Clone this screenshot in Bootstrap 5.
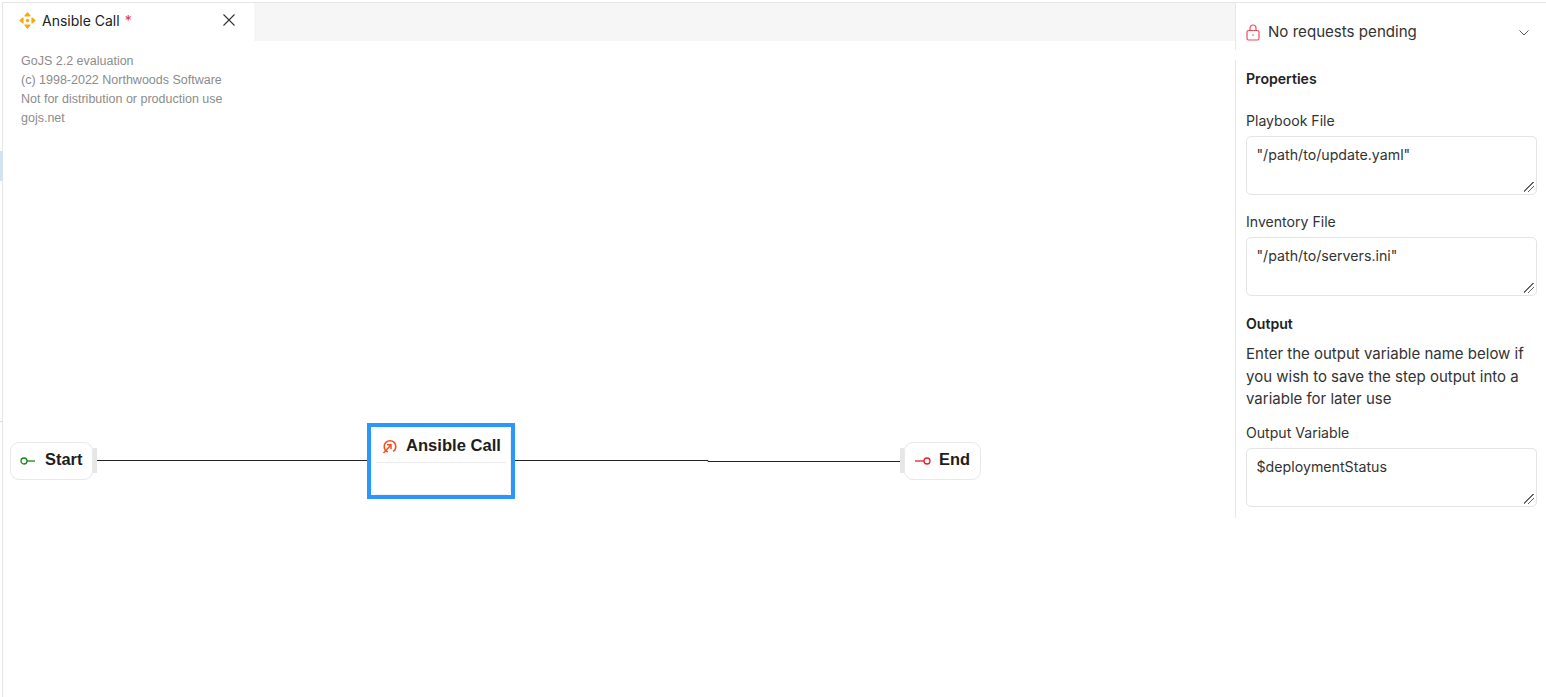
<!DOCTYPE html>
<html lang="en">
<head>
    <meta charset="UTF-8">
    <title>Ansible Call</title>
    <link href="https://cdn.jsdelivr.net/npm/bootstrap@5.3.3/dist/css/bootstrap.min.css" rel="stylesheet">
    <script src="https://cdn.jsdelivr.net/npm/bootstrap@5.3.3/dist/js/bootstrap.bundle.min.js"></script>
    <style>
        html, body { height: 100%; overflow: hidden; }
        body { font-family: Inter, "Liberation Sans", sans-serif; color: #222; background: #fff; }
        .app-frame { height: 697px; margin: 2px 0 0 2px; border-top: 1px solid #e6e6e6; border-left: 1px solid #e6e6e6; position: relative; }
        .nav-marker { position: absolute; left: -3px; top: 148px; width: 3px; height: 30px; background: #d3e3f2; }
        .nav-tick { position: absolute; left: -3px; top: 418px; width: 3px; height: 1px; background: #ddd; }
        .work-area { width: 1232px; }
        .tab-strip { height: 38px; background: #f6f6f6; }
        .doc-tab { width: 251px; background: #fff; padding: 0 19px 4px 16px; font-size: 14px; }
        .tab-glyph { margin-right: 6px; }
        .dirty-mark { color: #e8343f; margin-left: 5px; }
        .diagram { height: 656px; }
        .watermark { position: absolute; left: 18px; top: 11px; font: 12.5px/19px "Liberation Sans", sans-serif; color: #8c8c8c; }
        .flow-lines { position: absolute; left: 0; top: -41px; }
        .flow-node { position: absolute; background: #fff; border: 1px solid #e8e8e8; border-radius: 9px; font: bold 16.4px "Liberation Sans", sans-serif; color: #1d1d1d; }
        .start-node { left: 7px; top: 401px; width: 83px; height: 38px; padding-left: 34px; line-height: 32px; }
        .end-node { left: 901px; top: 401px; width: 77px; height: 38px; padding-left: 34px; line-height: 32px; }
        .node-icon { position: absolute; left: 9px; top: 12px; }
        .end-node .node-icon { left: 10px; }
        .port-tab { position: absolute; top: 5px; width: 4px; height: 25px; background: #e6e6e6; }
        .start-node .port-tab { right: -5px; }
        .end-node .port-tab { left: -5px; }
        .call-node { left: 364px; top: 382px; width: 148px; height: 76px; border: 4px solid #2b96fb; border-radius: 0; }
        .call-inner { height: 100%; border: 1px solid #efefef; border-radius: 6px; }
        .call-title { height: 35px; margin: 0 4px; padding-left: 30px; line-height: 35px; border-bottom: 1px solid #ececec; position: relative; font-size: 16.6px; white-space: nowrap; }
        .call-title svg { position: absolute; left: 6px; top: 11px; }
        .side-panel { width: 311px; }
        .request-bar { height: 47px; padding: 12px 17px 0 10px; border-left: 1px solid #e8e8e8; font-size: 15.1px; color: #333; }
        .prop-panel { margin-top: 10px; height: 458px; border-left: 1px solid #e8e8e8; padding: 9px 9px 0 10px; font-size: 14.1px; color: #333; }
        .prop-title { font-size: 14.1px; font-weight: 600; color: #222; line-height: 20px; }
        .prop-label { font-size: 14.1px; line-height: 20px; margin: 0 0 5px; }
        .prop-input.form-control { height: 59px; min-height: 59px; font-size: 14.2px; line-height: 20px; padding: 8px 10px 8px 9.500px; border: 1px solid #e4e4e4; border-radius: 5px; color: #333; }
        .prop-input::-webkit-resizer { background: linear-gradient(135deg, transparent 43%, #666 43%, #666 51%, transparent 51%, transparent 66%, #666 66%, #666 73%, transparent 73%) no-repeat 3px 3px / 10px 10px; }
        .prop-gap { margin-bottom: 17px; }
        .prop-head-gap { margin-bottom: 22px; }
        .output-title { margin-top: 18px; margin-bottom: 9px; }
        .prop-help { font-size: 15px; line-height: 22.5px; margin: 0 0 12.5px; }
    </style>
</head>
<body>

<div class="app-frame d-flex">
    <div class="nav-marker"></div>
    <div class="nav-tick"></div>

    <div class="work-area">
        <div class="tab-strip d-flex">
            <div class="doc-tab d-flex align-items-center">
                <svg width="17" height="17" viewBox="0 0 17 17" class="tab-glyph flex-shrink-0" fill="#f7a90d" stroke="#f7a90d" stroke-width="1.200" stroke-linejoin="round">
                    <path d="M8.500 1 11 4H6z"/><path d="M8.500 16 6 13h5z"/>
                    <path d="M1 8.500 4 6v5z"/><path d="M16 8.500 13 11V6z"/>
                    <circle cx="8.500" cy="8.500" r="1.700" stroke="none"/>
                </svg>
                <span>Ansible Call</span><span class="dirty-mark">*</span>
                <svg width="12" height="12" viewBox="0 0 12 12" class="ms-auto" stroke="#333" stroke-width="1.100" fill="none"><path d="M0.500 0.500l11 11M11.500 0.500l-11 11"/></svg>
            </div>
        </div>

        <div class="diagram position-relative">
            <div class="watermark">GoJS 2.2 evaluation<br>(c) 1998-2022 Northwoods Software<br>Not for distribution or production use<br>gojs.net</div>

            <svg class="flow-lines" width="1232" height="600" fill="none" stroke="#222" stroke-width="1">
                <path d="M92 460.500H365"/>
                <path d="M511 460.500H705V461.500H899"/>
            </svg>

            <div class="flow-node start-node">
                <svg class="node-icon" width="16" height="12" viewBox="0 0 16 12" fill="none" stroke="#138a13" stroke-width="1.300"><circle cx="4" cy="6" r="3"/><path d="M7 6h8"/></svg>
                Start
                <span class="port-tab"></span>
            </div>

            <div class="flow-node call-node">
                <div class="call-inner">
                    <div class="call-title">
                        <svg width="15" height="15" viewBox="0 0 15 15" fill="none" stroke="#f4511e" stroke-width="1.500"><circle cx="8" cy="7.500" r="5.800" stroke-dasharray="31 5.400" stroke-dashoffset="-11"/><path d="M1.500 14 8.500 6.500M5 5.800h4v4.200"/></svg>
                        Ansible Call
                    </div>
                </div>
            </div>

            <div class="flow-node end-node">
                <svg class="node-icon" width="16" height="12" viewBox="0 0 16 12" fill="none" stroke="#ee1c25" stroke-width="1.300"><path d="M0 6h9"/><circle cx="12" cy="6" r="3"/></svg>
                End
                <span class="port-tab"></span>
            </div>
        </div>
    </div>

    <div class="side-panel">
        <div class="request-bar d-flex align-items-center">
            <svg width="14" height="17" viewBox="0 0 14 17" class="me-2" fill="none" stroke="#ee4b5a" stroke-width="1.200">
                <rect x="1" y="6.500" width="12" height="9.500" rx="1.500"/>
                <path d="M4 6.500V4a3 3 0 0 1 6 0v2.500"/>
                <circle cx="7" cy="11" r="0.800" fill="#ee4b5a" stroke="none"/>
            </svg>
            <span>No requests pending</span>
            <svg width="10" height="6" viewBox="0 0 10 6" class="ms-auto" fill="none" stroke="#555" stroke-width="1"><path d="M0.500 0.500 5 5l4.500-4.500"/></svg>
        </div>

        <div class="prop-panel">
            <div class="prop-title prop-head-gap">Properties</div>

            <label class="prop-label d-block" for="playbook">Playbook File</label>
            <textarea class="form-control prop-input prop-gap" id="playbook">"/path/to/update.yaml"</textarea>

            <label class="prop-label d-block" for="inventory">Inventory File</label>
            <textarea class="form-control prop-input" id="inventory">"/path/to/servers.ini"</textarea>

            <div class="prop-title output-title">Output</div>
            <p class="prop-help">Enter the output variable name below if you wish to save the step output into a variable for later use</p>

            <label class="prop-label d-block" for="outputVar">Output Variable</label>
            <textarea class="form-control prop-input" id="outputVar">$deploymentStatus</textarea>
        </div>
    </div>
</div>

</body>
</html>
